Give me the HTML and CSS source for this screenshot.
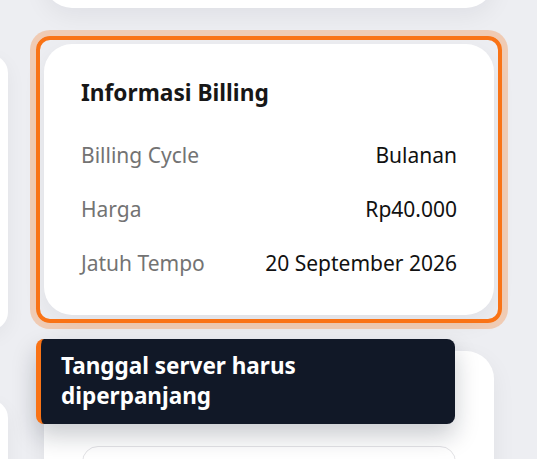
FILE: index.html
```html
<!DOCTYPE html>
<html lang="id">
<head>
    <meta charset="UTF-8">
    <meta name="viewport" content="width=device-width, initial-scale=1.0">
    <title>Informasi Billing</title>
    <link rel="stylesheet" href="styles.css">
</head>
<body>
    <div class="board">
        <!-- Side column (mostly scrolled off to the left) -->
        <div class="side">
            <div class="side-card side-card-tall"></div>
            <div class="side-card"></div>
        </div>

        <!-- Main column -->
        <div class="main">
            <div class="card card-top"></div>

            <div class="card billing is-highlighted">
                <h2 class="card-title">Informasi Billing</h2>
                <div class="info-list">
                    <div class="info-row">
                        <span class="info-label">Billing Cycle</span>
                        <span class="info-value">Bulanan</span>
                    </div>
                    <div class="info-row">
                        <span class="info-label">Harga</span>
                        <span class="info-value">Rp40.000</span>
                    </div>
                    <div class="info-row">
                        <span class="info-label">Jatuh Tempo</span>
                        <span class="info-value">20 September 2026</span>
                    </div>
                </div>

                <!-- Tour popover -->
                <div class="tour-popover">Tanggal server harus diperpanjang</div>
            </div>

            <div class="card card-next">
                <div class="inner-box"></div>
            </div>
        </div>
    </div>
</body>
</html>
```

FILE: styles.css
```css
body {
    margin: 0;
    background-color: #edeef2;
    font-family: "Noto Sans", "Open Sans", Arial, sans-serif;
    overflow: hidden;
    height: 459px;
}

.board {
    display: flex;
    gap: 36px;
    margin-left: -192px;
}

.side {
    width: 200px;
    flex-shrink: 0;
    display: flex;
    flex-direction: column;
    gap: 70px;
    padding-top: 55px;
}

.side-card {
    background: #ffffff;
    border-radius: 18px;
    height: 200px;
    box-shadow: 0 6px 20px rgba(15, 23, 42, 0.05);
}

.side-card-tall {
    height: 275px;
}

.main {
    width: 450px;
    flex-shrink: 0;
    display: flex;
    flex-direction: column;
    gap: 36px;
}

.card {
    background: #ffffff;
    border-radius: 28px;
    box-shadow: 0 8px 24px rgba(15, 23, 42, 0.06);
}

.card-top {
    height: 60px;
    margin-top: -52px;
}

.billing {
    position: relative;
    padding: 34px 37px 38px;
}

/* highlight ring around the active element */
.is-highlighted::after {
    content: "";
    position: absolute;
    inset: -8px;
    border: 4px solid #f97316;
    border-radius: 14px;
    box-shadow: 0 0 0 6px rgba(249, 115, 22, 0.28);
    pointer-events: none;
}

.card-title {
    margin: 0 0 33px;
    font-size: 22.7px;
    line-height: 30px;
    font-weight: 700;
    color: #171717;
}

.info-list {
    display: flex;
    flex-direction: column;
    gap: 26px;
}

.info-row {
    display: flex;
    justify-content: space-between;
    font-size: 21px;
    line-height: 28px;
}

.info-label {
    color: #737373;
}

.info-value {
    color: #111111;
}

.tour-popover {
    position: absolute;
    top: calc(100% + 24px);
    left: -8px;
    width: 374px;
    padding: 12px 20px 13px 20px;
    background: #111827;
    border-left: 5px solid #f97316;
    border-radius: 8px;
    color: #ffffff;
    font-size: 22.5px;
    line-height: 30px;
    font-weight: 700;
    box-shadow: 0 12px 24px rgba(15, 23, 42, 0.22);
    z-index: 2;
}

.card-next {
    height: 200px;
    padding: 95px 38px 0 38px;
}

.inner-box {
    height: 100px;
    border: 1px solid #e3e3e6;
    border-radius: 16px;
}
```
